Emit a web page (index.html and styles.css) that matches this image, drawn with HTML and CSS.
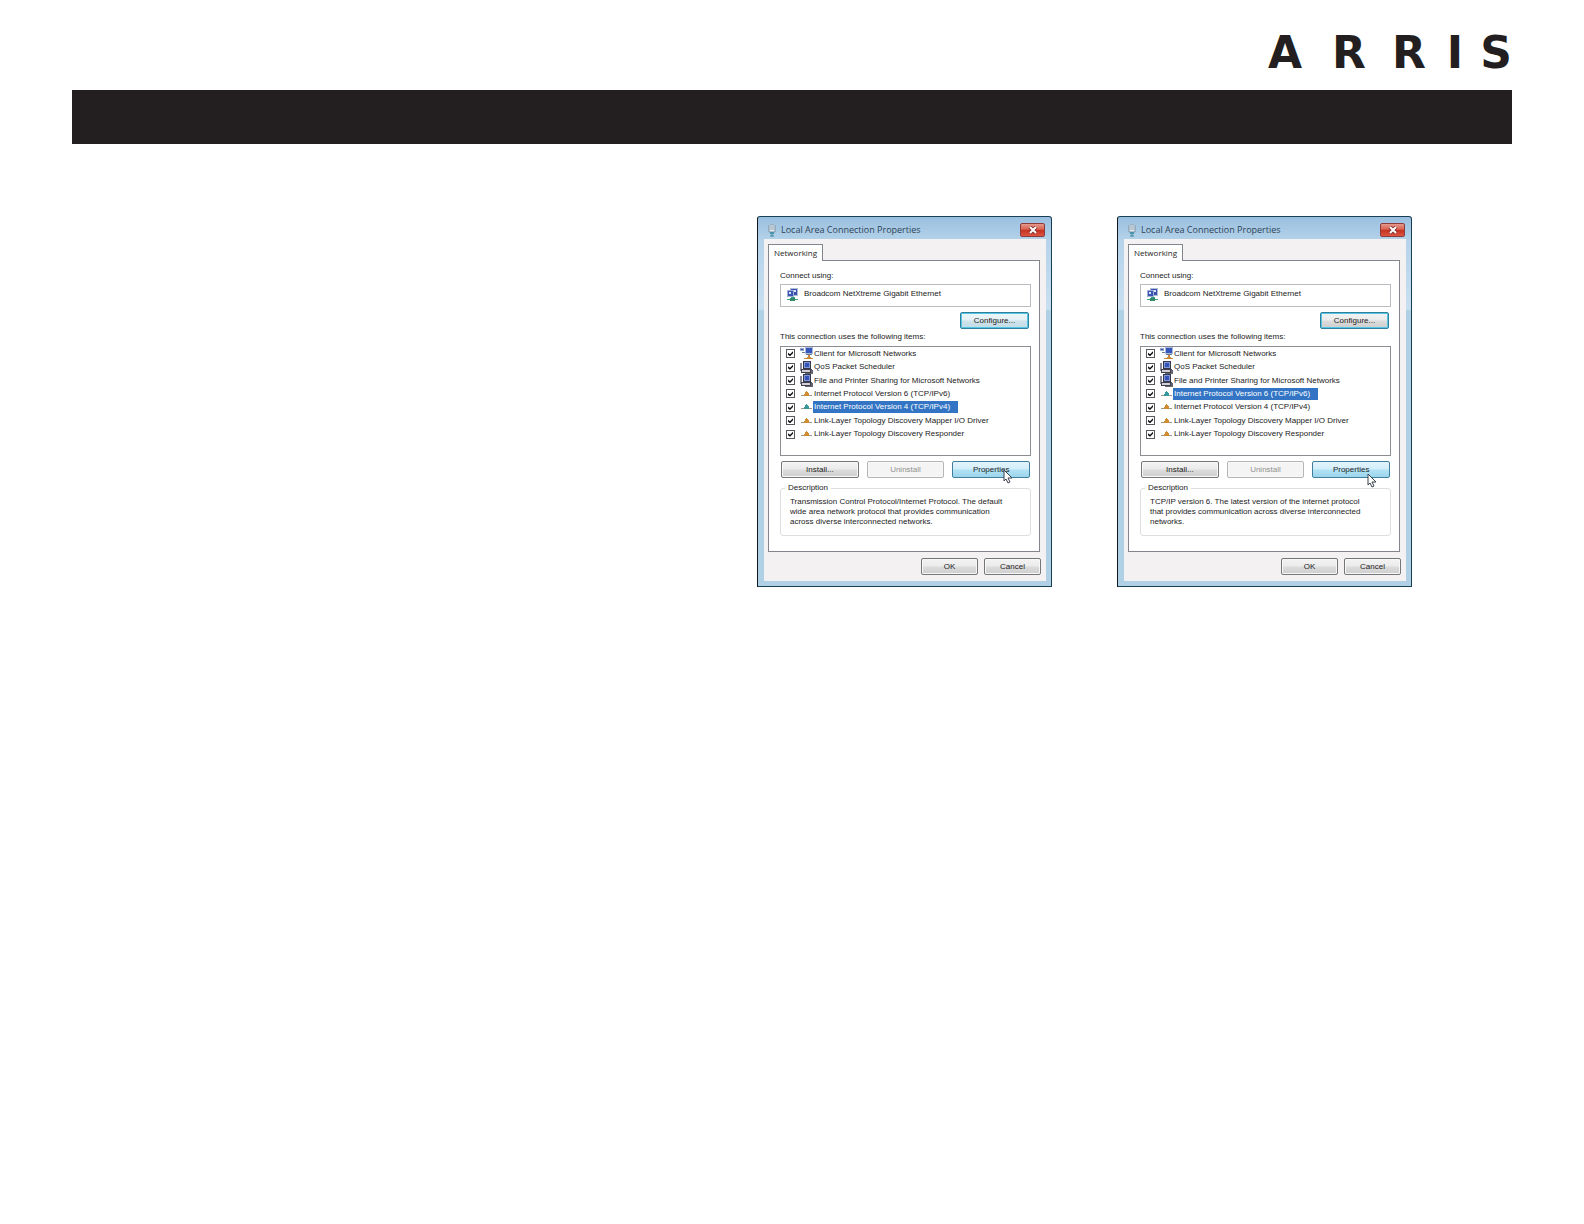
FILE: index.html
```
<!DOCTYPE html>
<html lang="en">

<head>
    <meta charset="UTF-8">
    <meta name="viewport" content="width=device-width, initial-scale=1.0">
    <title>Local Area Connection Properties</title>
    <link rel="stylesheet" href="styles.css">
</head>

<body>
    <!-- shared icons -->
    <svg class="sprite" aria-hidden="true">
        <symbol id="plug" viewBox="0 0 8 13">
            <path d="M1 1v7h6V1" fill="#e4edf3" stroke="#7d919f"/>
            <path d="M3 0v6M5 0v6" stroke="#8ea2ae"/>
            <path d="M2 8h4v2H2z" fill="#4b93ad"/>
            <path d="M4 10v2M2 12h4" stroke="#38839b"/>
        </symbol>
        <symbol id="adapter" viewBox="0 0 13 13">
            <path d="M4 0h8v8H4z" fill="#aebed8"/>
            <path d="M5 1h6v6H5z" fill="#3a50ad"/>
            <path d="M1 2h7v7H1z" fill="#9fb0d4"/>
            <path d="M2 3h5v5H2z" fill="#3a54b5"/>
            <path d="M3 4h2v2H3zM8 2h2v2H8z" fill="#d9e6fa"/>
            <path d="M5 9h4v2H5z" fill="#3b9c7c"/>
            <path d="M1 11h11v1H1z" fill="#38a578"/>
            <path d="M4 10h5v3H4z" fill="#33896a"/>
        </symbol>
        <symbol id="client" viewBox="0 0 13 13">
            <path d="M5 0h8v7H5z" fill="#a9b8d8"/>
            <path d="M6 1h6v5H6z" fill="#3658bd"/>
            <path d="M0 1h4v3H0z" fill="#97a5c4"/>
            <path d="M1 2h2v1H1z" fill="#3658bd"/>
            <path d="M2 5h3v1H2zM6 7h6v1H6z" fill="#6d7896"/>
            <path d="M8 8h2v2h1v1h2v1H4v-1h3v-1h1z" fill="#c9893a"/>
        </symbol>
        <symbol id="service" viewBox="0 0 13 13">
            <path d="M3 0h8v8H3z" fill="#35354d"/>
            <path d="M4 1h6v6H4z" fill="#809bd8"/>
            <path d="M5 2h4v4H5z" fill="#3453b6"/>
            <path d="M0 2h2v8H0z" fill="#8c8c98"/>
            <path d="M1 8h11v4H1z" fill="#42424f"/>
            <path d="M2 9h8v2H2z" fill="#d0d0d6"/>
            <path d="M11 9h2v4H5v-1h6z" fill="#65656f"/>
        </symbol>
        <symbol id="protocol" viewBox="0 0 11 6">
            <path d="M0 4h11v1H0z" fill="#9c9684"/>
            <path d="M5 0h1v1h1v1h1v3H3V3h1V1h1z" fill="currentColor"/>
        </symbol>
        <symbol id="pointer" viewBox="0 0 10 15">
            <path d="M1 1v11l2-2 2 4 2-1-2-4h4z" fill="#fff" stroke="#39414c"/>
        </symbol>
        <symbol id="cross" viewBox="0 0 10 8">
            <path d="M2 1l6 6M8 1L2 7" stroke="#7b2a26" stroke-width="3.6"/>
            <path d="M2 1l6 6M8 1L2 7" stroke="#fff" stroke-width="2"/>
        </symbol>
    </svg>

    <header class="header">
        <svg class="logo" viewBox="0 0 256 60" role="img" aria-label="ARRIS">
            <text x="25 89 149 195 236" y="48">ARRIS</text>
        </svg>
        <div class="banner"></div>
    </header>

    <main class="dialogs">
        <section class="dialog">
            <div class="titlebar">
                <svg class="plug"><use href="#plug"/></svg>
                <h2 class="title">Local Area Connection Properties</h2>
                <button class="close" aria-label="Close"><svg><use href="#cross"/></svg></button>
            </div>
            <div class="body">
                <button class="tab">Networking</button>
                <div class="panel">
                    <label class="caption" for="adapter-v4">Connect using:</label>
                    <div class="adapter">
                        <svg><use href="#adapter"/></svg>
                        <input type="text" id="adapter-v4" value="Broadcom NetXtreme Gigabit Ethernet" readonly>
                    </div>
                    <button class="btn configure">Configure...</button>
                    <p class="caption">This connection uses the following items:</p>
                    <ul class="items">
                        <li><label><input type="checkbox" checked><svg><use href="#client"/></svg><span>Client for Microsoft Networks</span></label></li>
                        <li><label><input type="checkbox" checked><svg><use href="#service"/></svg><span>QoS Packet Scheduler</span></label></li>
                        <li><label><input type="checkbox" checked><svg><use href="#service"/></svg><span>File and Printer Sharing for Microsoft Networks</span></label></li>
                        <li><label><input type="checkbox" checked><svg class="protocol"><use href="#protocol"/></svg><span>Internet Protocol Version 6 (TCP/IPv6)</span></label></li>
                        <li class="selected"><label><input type="checkbox" checked><svg class="protocol"><use href="#protocol"/></svg><span>Internet Protocol Version 4 (TCP/IPv4)</span></label></li>
                        <li><label><input type="checkbox" checked><svg class="protocol"><use href="#protocol"/></svg><span>Link-Layer Topology Discovery Mapper I/O Driver</span></label></li>
                        <li><label><input type="checkbox" checked><svg class="protocol"><use href="#protocol"/></svg><span>Link-Layer Topology Discovery Responder</span></label></li>
                    </ul>
                    <div class="actions">
                        <button class="btn">Install...</button>
                        <button class="btn" disabled>Uninstall</button>
                        <button class="btn hot">Properties</button>
                        <svg class="pointer"><use href="#pointer"/></svg>
                    </div>
                    <fieldset class="description">
                        <legend>Description</legend>
                        <p>Transmission Control Protocol/Internet Protocol. The default<br>wide area network protocol that provides communication<br>across diverse interconnected networks.</p>
                    </fieldset>
                </div>
                <div class="footer">
                    <button class="btn">OK</button>
                    <button class="btn">Cancel</button>
                </div>
            </div>
        </section>

        <section class="dialog">
            <div class="titlebar">
                <svg class="plug"><use href="#plug"/></svg>
                <h2 class="title">Local Area Connection Properties</h2>
                <button class="close" aria-label="Close"><svg><use href="#cross"/></svg></button>
            </div>
            <div class="body">
                <button class="tab">Networking</button>
                <div class="panel">
                    <label class="caption" for="adapter-v6">Connect using:</label>
                    <div class="adapter">
                        <svg><use href="#adapter"/></svg>
                        <input type="text" id="adapter-v6" value="Broadcom NetXtreme Gigabit Ethernet" readonly>
                    </div>
                    <button class="btn configure plain">Configure...</button>
                    <p class="caption">This connection uses the following items:</p>
                    <ul class="items">
                        <li><label><input type="checkbox" checked><svg><use href="#client"/></svg><span>Client for Microsoft Networks</span></label></li>
                        <li><label><input type="checkbox" checked><svg><use href="#service"/></svg><span>QoS Packet Scheduler</span></label></li>
                        <li><label><input type="checkbox" checked><svg><use href="#service"/></svg><span>File and Printer Sharing for Microsoft Networks</span></label></li>
                        <li class="selected"><label><input type="checkbox" checked><svg class="protocol"><use href="#protocol"/></svg><span>Internet Protocol Version 6 (TCP/IPv6)</span></label></li>
                        <li><label><input type="checkbox" checked><svg class="protocol"><use href="#protocol"/></svg><span>Internet Protocol Version 4 (TCP/IPv4)</span></label></li>
                        <li><label><input type="checkbox" checked><svg class="protocol"><use href="#protocol"/></svg><span>Link-Layer Topology Discovery Mapper I/O Driver</span></label></li>
                        <li><label><input type="checkbox" checked><svg class="protocol"><use href="#protocol"/></svg><span>Link-Layer Topology Discovery Responder</span></label></li>
                    </ul>
                    <div class="actions">
                        <button class="btn">Install...</button>
                        <button class="btn" disabled>Uninstall</button>
                        <button class="btn hot">Properties</button>
                        <svg class="pointer low"><use href="#pointer"/></svg>
                    </div>
                    <fieldset class="description">
                        <legend>Description</legend>
                        <p>TCP/IP version 6. The latest version of the internet protocol<br>that provides communication across diverse interconnected<br>networks.</p>
                    </fieldset>
                </div>
                <div class="footer">
                    <button class="btn">OK</button>
                    <button class="btn">Cancel</button>
                </div>
            </div>
        </section>
    </main>
</body>

</html>
```
FILE: styles.css
```
* {
    box-sizing: border-box;
}

body {
    margin: 0;
    padding: 20px 72px;
    background-color: #fff;
    color: #222;
    font-family: "Liberation Sans", Arial, sans-serif;
    font-size: 8px;
    line-height: 10px;
}

svg {
    display: block;
    flex: none;
}

button, input {
    margin: 0;
    padding: 0;
    font: inherit;
    color: inherit;
}

.sprite {
    position: absolute;
    width: 0;
    height: 0;
}

.header {
    display: flex;
    flex-direction: column;
    align-items: flex-end;
    gap: 10px;
}

.logo {
    width: 256px;
    height: 60px;
    margin-right: -4px;
}

.logo text {
    font-family: "DejaVu Sans", Verdana, sans-serif;
    font-size: 44px;
    font-weight: bold;
    text-anchor: middle;
    fill: #231f20;
}

.banner {
    align-self: stretch;
    height: 54px;
    background-color: #231f20;
}

.dialogs {
    display: flex;
    flex-wrap: wrap;
    justify-content: flex-end;
    gap: 65px;
    padding: 72px 100px 0 0;
}

.dialog {
    width: 295px;
    padding: 0 5px 5px 6px;
    border: 1px solid #173f55;
    border-left-color: #10171c;
    border-radius: 3px 3px 0 0;
    background: linear-gradient(#9abfdf, #b5d3ea 24px, #c8dff0 92px, #b0d1e5 94px);
}

.titlebar {
    display: flex;
    align-items: center;
    height: 22px;
    padding: 4px 1px 0 4px;
}

.plug {
    width: 8px;
    height: 13px;
    margin-right: 5px;
}

.title {
    flex: 1;
    margin: 0;
    font-family: "Open Sans", "Noto Sans", sans-serif;
    font-size: 9px;
    font-weight: normal;
    color: #2c4456;
}

.close {
    display: flex;
    align-items: center;
    justify-content: center;
    width: 25px;
    height: 14px;
    border: 1px solid #8c3a3a;
    border-radius: 2px;
    background: linear-gradient(#e59a8c, #d8604f 45%, #c5301f 50%, #dc5442);
}

.close svg {
    width: 10px;
    height: 8px;
}

.body {
    padding: 5px 5px 6px 4px;
    background-color: #f3f1f2;
}

.tab {
    display: block;
    position: relative;
    height: 17px;
    margin-bottom: -1px;
    padding: 0 5px;
    border: 1px solid #84848c;
    border-bottom: 0;
    background-color: #fff;
    font-family: "Open Sans", "Noto Sans", sans-serif;
    font-size: 8px;
}

.panel {
    display: flex;
    flex-direction: column;
    padding: 10px 8px 15px 11px;
    margin-right: 1px;
    border: 1px solid #84848c;
    background-color: #fff;
}

.caption {
    margin: 0;
}

.adapter {
    display: flex;
    align-items: center;
    gap: 5px;
    height: 23px;
    margin-top: 3px;
    padding: 0 5px 4px;
    border: 1px solid #b9bcc0;
}

.adapter svg {
    width: 13px;
    height: 13px;
    margin-top: 2px;
}

.adapter input {
    flex: 1;
    min-width: 0;
    border: 0;
    outline: 0;
    background: none;
}

.btn {
    height: 17px;
    border: 1px solid #74767a;
    border-radius: 2px;
    background: linear-gradient(#f3f3f3, #ebebeb 48%, #dcdcdc 52%, #cecece);
    box-shadow: inset 0 0 0 1px #f8f8f8;
}

.btn:disabled {
    border-color: #b3b5b7;
    background: #f4f4f4;
    color: #929292;
}

.btn.hot {
    border-color: #417f9f;
    background: linear-gradient(#e3f4fc, #d2eefb 48%, #b2e2f5 52%, #9cd5ec);
    box-shadow: none;
}

.configure {
    align-self: flex-end;
    width: 69px;
    margin: 5px 2px 3px 0;
    border-color: #327f9b;
    background: linear-gradient(#eef7fa, #e3f0f5 48%, #cfe3eb 52%, #c3dce6);
    box-shadow: inset 0 0 0 1px #52c6e4;
}

.configure.plain {
    background: linear-gradient(#f3f3f3, #ebebeb 48%, #dcdcdc 52%, #cecece);
}

.items {
    display: grid;
    grid-auto-rows: 1fr;
    min-height: 110px;
    margin: 4px 0 5px;
    padding: 0 5px 14px;
    border: 1px solid #8a8d92;
    list-style: none;
}

.items li, .items label {
    display: flex;
    align-items: center;
}

.items input {
    appearance: none;
    display: grid;
    place-items: center;
    width: 9px;
    height: 9px;
    margin-right: 5px;
    border: 1px solid #55585c;
    background-color: #fff;
}

.items input:checked::before {
    content: "";
    width: 5px;
    height: 5px;
    background-color: #111;
    clip-path: polygon(0 30%, 40% 60%, 100% 0, 100% 40%, 40% 100%, 0 70%);
}

.items svg {
    width: 13px;
    height: 13px;
}

.items .protocol {
    width: 11px;
    height: 6px;
    margin: 0 1px;
    color: #d08b2e;
}

.items span {
    padding: 1px 8px 1px 1px;
    white-space: nowrap;
}

.items .selected span {
    background-color: #3375c4;
    color: #fff;
}

.items .selected .protocol {
    color: #35999c;
}

.actions {
    display: grid;
    grid-template-columns: repeat(3, 1fr);
    gap: 8px;
    position: relative;
    margin: 0 1px;
}

.pointer {
    position: absolute;
    top: 8px;
    right: 17px;
    width: 10px;
    height: 15px;
}

.pointer.low {
    top: 12px;
    right: 13px;
}

.description {
    min-width: 0;
    margin: 5px 0 0;
    padding: 4px 9px 8px;
    border: 1px solid #dcdfe2;
    border-radius: 3px;
}

.description legend {
    margin-left: -5px;
    padding: 0 3px;
}

.description p {
    margin: 0;
    white-space: nowrap;
}

.footer {
    display: flex;
    justify-content: flex-end;
    gap: 6px;
    padding-top: 6px;
}

.footer .btn {
    width: 57px;
}
```
